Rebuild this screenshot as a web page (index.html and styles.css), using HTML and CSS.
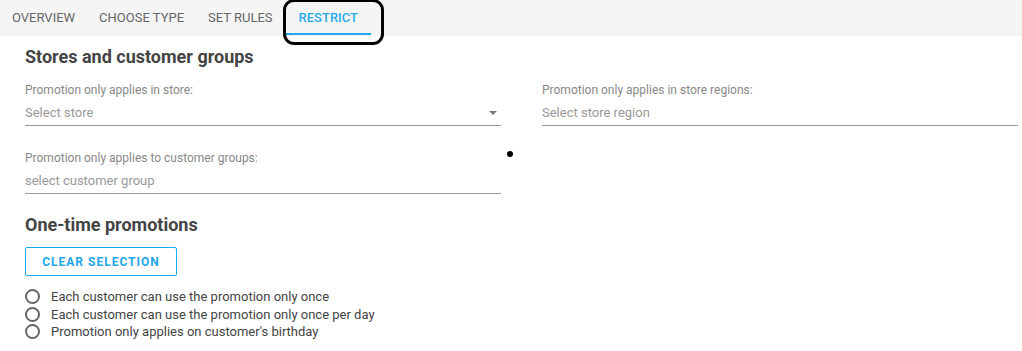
FILE: index.html
```html
<!DOCTYPE html>
<html>
<head>
<meta charset="utf-8">
<link rel="stylesheet" href="styles.css">
</head>
<body>
<nav class="tabs">
  <div class="tab">Overview</div>
  <div class="tab">Choose type</div>
  <div class="tab">Set rules</div>
  <div class="tab active">Restrict</div>
</nav>
<div class="mark-ring"></div>
<div class="mark-dot"></div>
<main class="content">
  <h2 class="section-title">Stores and customer groups</h2>
  <div class="fields">
    <div class="field">
      <label class="field-label">Promotion only applies in store:</label>
      <div class="field-input">
        <span class="placeholder">Select store</span>
        <span class="caret"></span>
      </div>
    </div>
    <div class="field">
      <label class="field-label">Promotion only applies in store regions:</label>
      <div class="field-input"><span class="placeholder">Select store region</span></div>
    </div>
    <div class="field">
      <label class="field-label">Promotion only applies to customer groups:</label>
      <div class="field-input"><span class="placeholder">select customer group</span></div>
    </div>
  </div>
  <h2 class="section-title second">One-time promotions</h2>
  <button class="btn-outline">Clear selection</button>
  <div class="radios">
    <label class="radio"><span class="circle"></span>Each customer can use the promotion only once</label>
    <label class="radio"><span class="circle"></span>Each customer can use the promotion only once per day</label>
    <label class="radio"><span class="circle"></span>Promotion only applies on customer's birthday</label>
  </div>
</main>
</body>
</html>
```
FILE: styles.css
```css
html, body {
  margin: 0;
  padding: 0;
  background: #fff;
  font-family: Roboto, "Liberation Sans", sans-serif;
  color: #444;
}
body {
  position: relative;
  width: 1022px;
  height: 351px;
  overflow: hidden;
}
.tabs {
  display: flex;
  height: 36px;
  background: #f5f5f5;
}
.tab {
  padding: 0 12px;
  height: 35px;
  line-height: 35px;
  font-size: 13px;
  text-transform: uppercase;
  color: #666;
  box-sizing: border-box;
}
.tab.active {
  padding: 0 13px 0 14px;
  color: #29abe9;
  font-weight: 500;
  border-bottom: 2px solid #1ea7ec;
}
.mark-ring {
  position: absolute;
  left: 283px;
  top: -1px;
  width: 95px;
  height: 40px;
  border: 3.5px solid #000;
  border-radius: 11px;
}
.mark-dot {
  position: absolute;
  left: 507px;
  top: 151px;
  width: 6px;
  height: 6px;
  border-radius: 50%;
  background: #000;
}
.content {
  padding: 0 5px 0 25px;
}
.section-title {
  margin: 0;
  padding-top: 10px;
  height: 32px;
  font-size: 18px;
  font-weight: 700;
  color: #444;
  line-height: 22px;
}
.section-title.second {
  padding-top: 20px;
  height: 33px;
}
.fields {
  display: grid;
  grid-template-columns: 476px 476px;
  column-gap: 41px;
  row-gap: 24px;
  margin-top: 4px;
}
.field {
  display: flex;
  flex-direction: column;
}
.field-label {
  font-size: 12px;
  color: #888;
  line-height: 16px;
  margin-bottom: 7px;
}
.field-input {
  display: flex;
  align-items: center;
  justify-content: space-between;
  height: 20px;
  border-bottom: 1px solid #999;
}
.placeholder {
  font-size: 13px;
  color: #999;
  line-height: 16px;
  padding-bottom: 4px;
}
.caret {
  width: 0;
  height: 0;
  border-left: 4px solid transparent;
  border-right: 4px solid transparent;
  border-top: 4px solid #777;
  margin-right: 4px;
  margin-bottom: 4px;
}
.btn-outline {
  display: block;
  width: 152px;
  height: 29px;
  margin: 0;
  padding: 0;
  background: #fff;
  border: 1px solid #1ea7ec;
  border-radius: 2px;
  color: #1ea7ec;
  font-family: Roboto, "Liberation Sans", sans-serif;
  font-size: 12px;
  font-weight: 700;
  letter-spacing: 1px;
  text-transform: uppercase;
}
.radios {
  display: flex;
  flex-direction: column;
  margin-top: 12px;
}
.radio {
  display: flex;
  align-items: center;
  height: 17.5px;
  font-size: 13px;
  color: #444;
}
.circle {
  width: 11px;
  height: 11px;
  border: 2px solid #666;
  border-radius: 50%;
  margin-right: 11px;
  flex: none;
}
```
